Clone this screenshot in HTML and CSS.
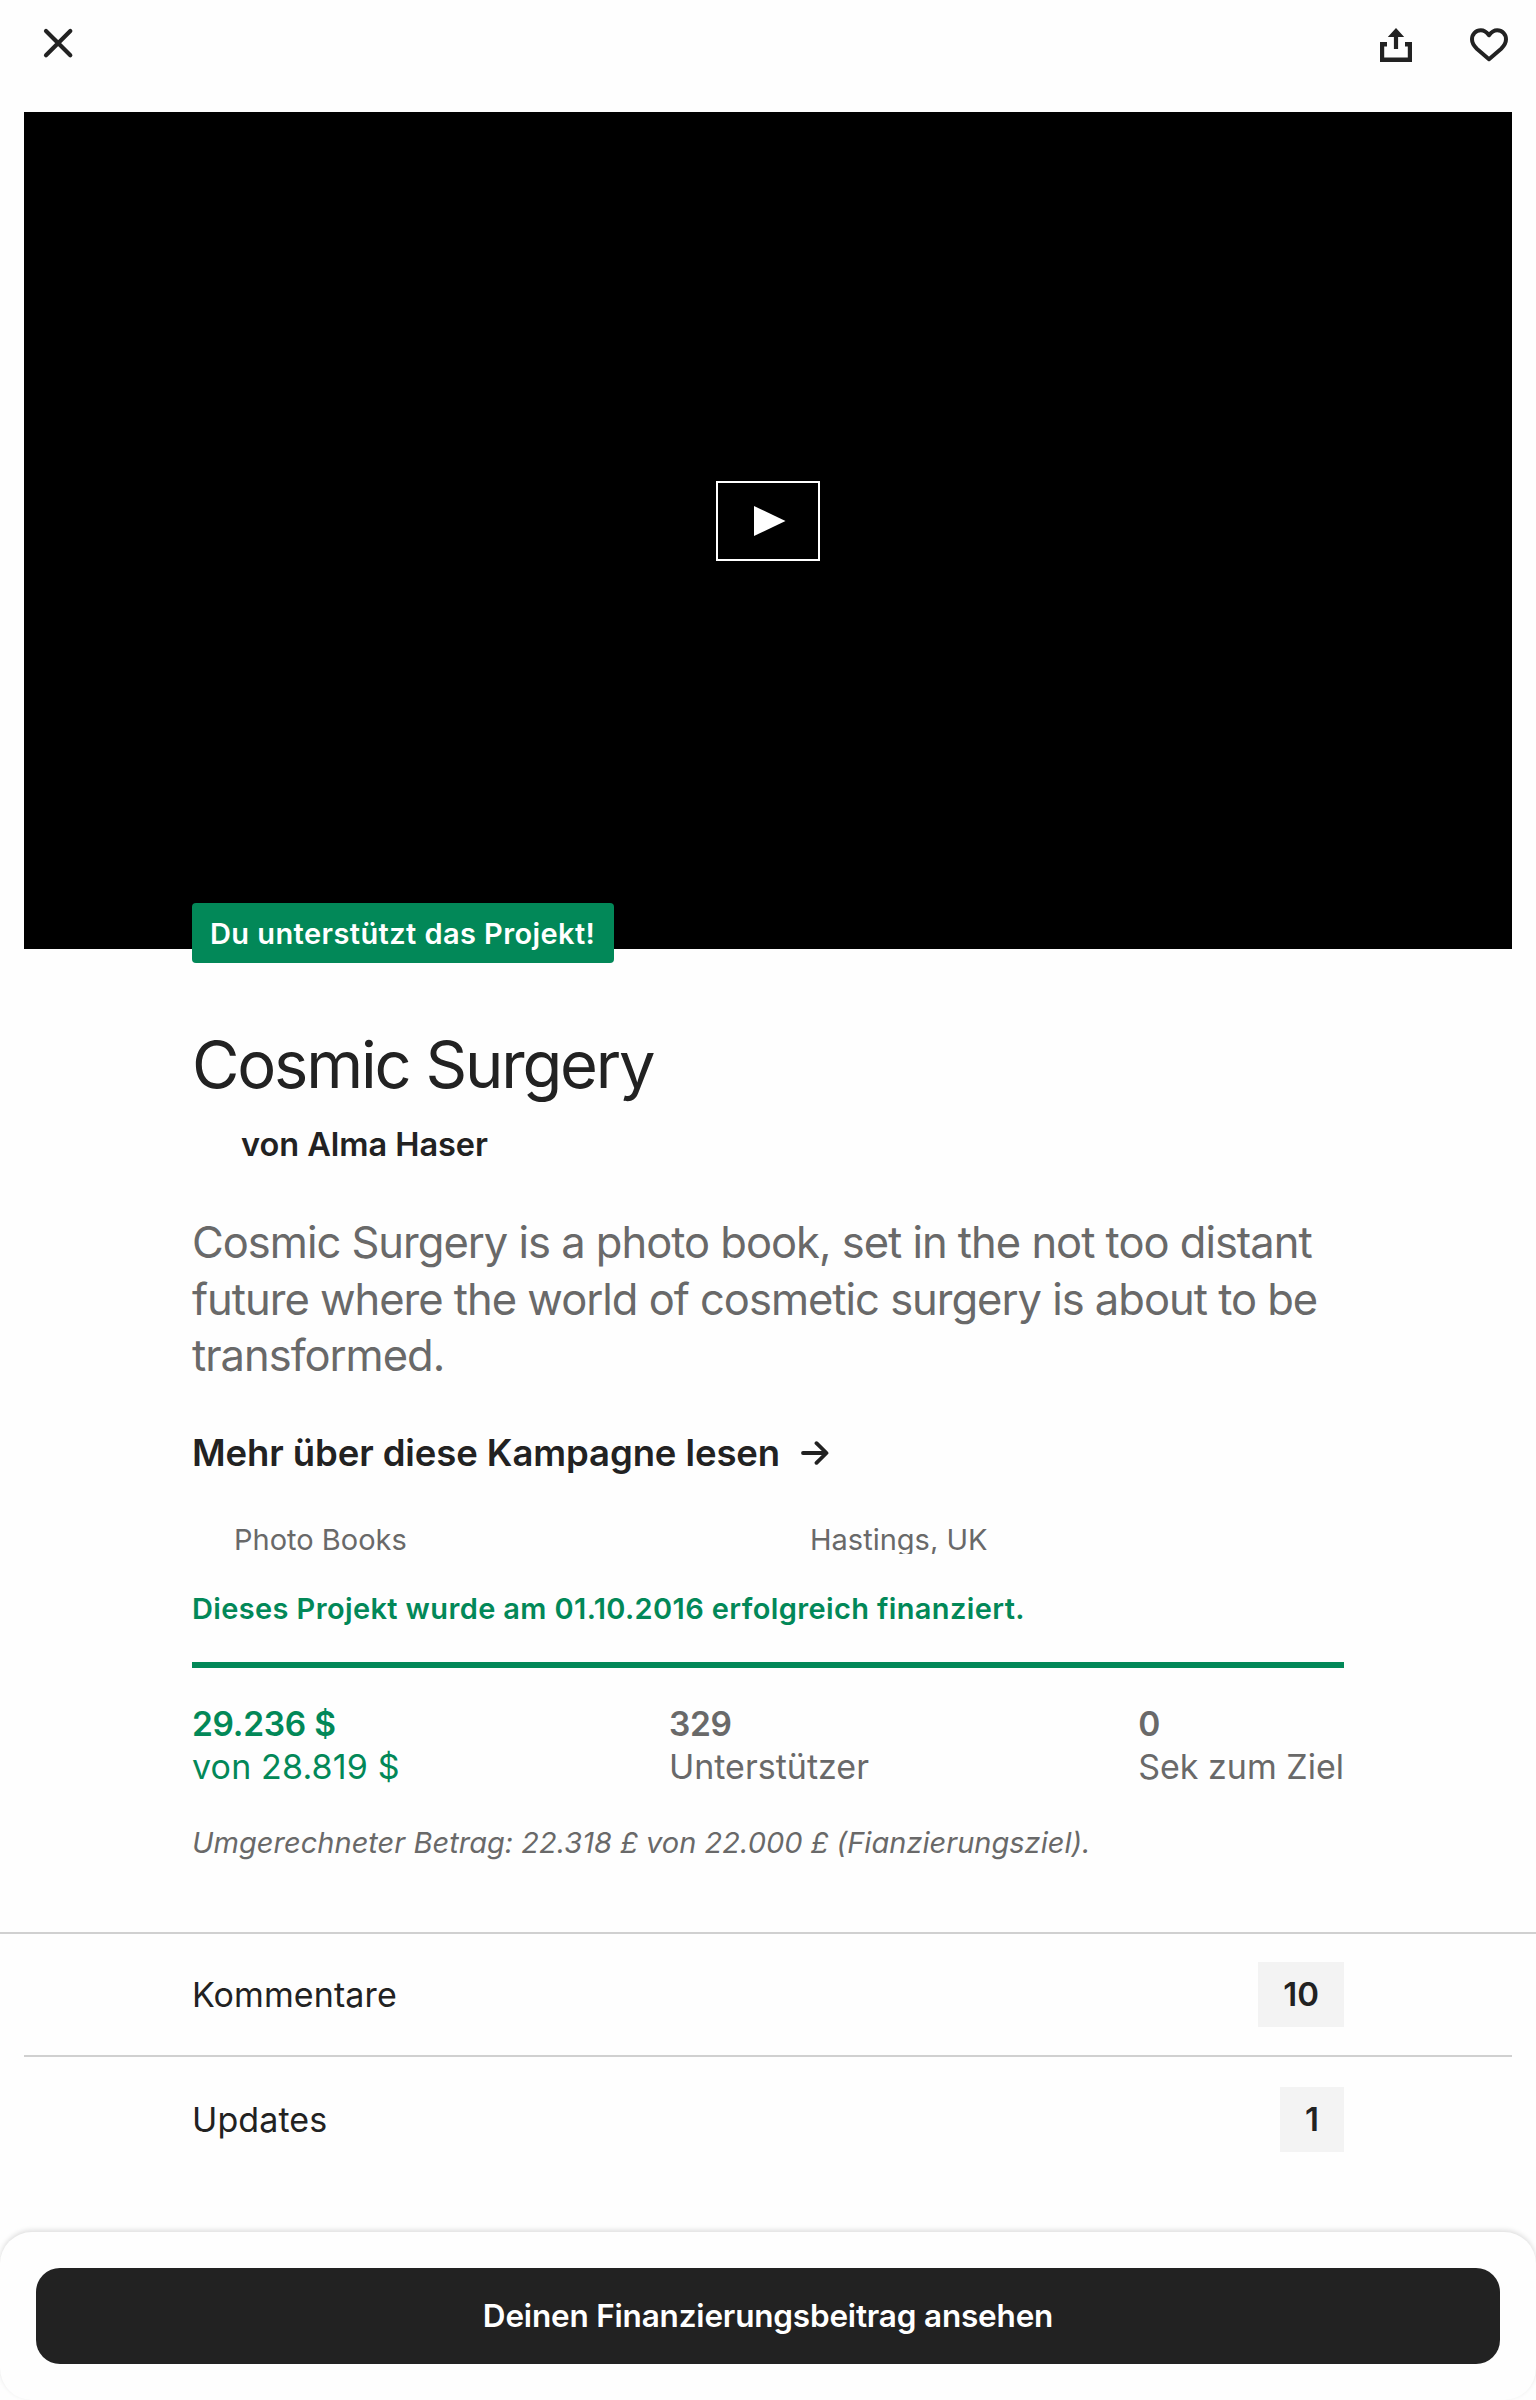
FILE: index.html
```html
<!DOCTYPE html>
<html lang="de">
<head>
<meta charset="utf-8">
<title>Cosmic Surgery</title>
<link rel="stylesheet" href="styles.css">
</head>
<body>
<header class="topbar">
  <svg class="icon-close" viewBox="0 0 32 32" width="32" height="32"><path d="M4 4 28.3 28.3M28.3 4 4 28.3" fill="none" stroke="#222" stroke-width="4.2" stroke-linecap="round"/></svg>
  <div class="topbar-actions">
    <svg viewBox="0 0 32 34" width="32" height="34"><path d="M7 16.3H2V31.8H30V16.3H25" fill="none" stroke="#222" stroke-width="4.4"/><path d="M16 0 24.2 9H18.1V21H13.9V9H7.8Z" fill="#222"/></svg>
    <svg viewBox="0 0 38 34" width="38" height="34"><path d="M19 7.2C16.3 3.6 13.9 2.2 10.8 2.2C5.8 2.2 2 6.1 2 11.3C2 15 3.6 17.6 6.8 20.7L19 31.2L31.2 20.7C34.4 17.6 36 15 36 11.3C36 6.1 32.2 2.2 27.2 2.2C24.1 2.2 21.7 3.6 19 7.2Z" fill="none" stroke="#222" stroke-width="4" stroke-linejoin="round"/></svg>
  </div>
</header>
<section class="video">
  <div class="play"><svg viewBox="0 0 32 30" width="32" height="30"><path d="M0 0 31.5 15 0 30Z" fill="#fff"/></svg></div>
</section>
<main class="content">
  <div class="tag">Du unterstützt das Projekt!</div>
  <h1 class="title">Cosmic Surgery</h1>
  <p class="author">von Alma Haser</p>
  <p class="blurb">Cosmic Surgery is a photo book, set in the not too distant future where the world of cosmetic surgery is about to be transformed.</p>
  <a class="more"><span>Mehr über diese Kampagne lesen</span><svg viewBox="0 0 28 24" width="28" height="24"><path d="M2 12H25M15.5 2.2 25.5 12 15.5 21.8" fill="none" stroke="#222" stroke-width="3.8" stroke-linecap="round" stroke-linejoin="round"/></svg></a>
  <div class="meta"><span>Photo Books</span><span>Hastings, UK</span></div>
  <p class="funded">Dieses Projekt wurde am 01.10.2016 erfolgreich finanziert.</p>
  <div class="progress"></div>
  <div class="stats">
    <div class="stat stat-green"><strong>29.236 $</strong><span>von 28.819 $</span></div>
    <div class="stat"><strong>329</strong><span>Unterstützer</span></div>
    <div class="stat"><strong>0</strong><span>Sek zum Ziel</span></div>
  </div>
  <p class="note">Umgerechneter Betrag: 22.318 £ von 22.000 £ (Fianzierungsziel).</p>
</main>
<nav class="links">
  <a class="row"><span>Kommentare</span><span class="count">10</span></a>
  <hr class="divider">
  <a class="row row-last"><span>Updates</span><span class="count">1</span></a>
</nav>
<footer class="panel"><button class="cta">Deinen Finanzierungsbeitrag ansehen</button></footer>
</body>
</html>
```
FILE: styles.css
```css
* { box-sizing: border-box; margin: 0; padding: 0; }

body {
  height: 2400px;
  overflow: hidden;
  background: #fefefe;
  color: #222;
  font-family: Inter, "Liberation Sans", sans-serif;
  font-weight: 400;
}

svg { display: block; flex: none; }

.topbar {
  display: flex;
  justify-content: space-between;
  height: 112px;
  padding: 28px 28px 0 42px;
}
.icon-close { margin-top: -1px; }
.topbar-actions { display: flex; gap: 58px; }

.video {
  display: flex;
  align-items: center;
  justify-content: center;
  height: 837px;
  margin: 0 24px;
  padding-bottom: 19px;
  background: #000;
}
.play {
  display: flex;
  align-items: center;
  width: 104px;
  height: 80px;
  padding-left: 36px;
  border: 2px solid #fff;
}

.content { width: 1152px; margin: 0 auto; }

.tag {
  width: 422px;
  height: 60px;
  margin-top: -46px;
  padding-left: 18px;
  border-radius: 4px;
  background: #028858;
  color: #fff;
  font-size: 29px;
  font-weight: 600;
  line-height: 62px;
  letter-spacing: 0.41px;
  white-space: nowrap;
}
.title {
  margin-top: 62px;
  font-size: 65px;
  font-weight: 400;
  line-height: 80px;
  letter-spacing: -2.2px;
}
.author {
  margin-top: 20px;
  padding-left: 49px;
  font-size: 32.5px;
  font-weight: 600;
  line-height: 40px;
  letter-spacing: -0.04px;
}
.blurb {
  margin-top: 49px;
  color: #696969;
  font-size: 43.5px;
  line-height: 56.67px;
  letter-spacing: -1.01px;
}
.more {
  display: flex;
  align-items: center;
  gap: 21px;
  margin-top: 47px;
  font-size: 36.5px;
  font-weight: 600;
  line-height: 44px;
  letter-spacing: -0.1px;
}
.meta {
  display: grid;
  grid-template-columns: 1fr 1fr;
  height: 29px;
  margin-top: 50px;
  overflow: hidden;
  color: #696969;
  font-size: 29px;
  line-height: 29px;
}
.meta span { padding-left: 42px; }
.funded {
  margin-top: 37px;
  color: #028858;
  font-size: 29px;
  font-weight: 600;
  line-height: 36px;
  letter-spacing: 0.37px;
}
.progress { height: 6px; margin-top: 35px; background: #028858; }

.stats {
  display: flex;
  justify-content: space-between;
  margin-top: 35px;
  color: #696969;
  font-size: 34px;
  line-height: 42px;
}
.stat { display: flex; flex-direction: column; }
.stat strong { font-size: 33.5px; font-weight: 600; line-height: 43px; letter-spacing: -0.28px; }
.stat-green { color: #028858; letter-spacing: 0.15px; }

.note {
  margin-top: 37px;
  color: #696969;
  font-size: 29px;
  font-style: italic;
  line-height: 36px;
  letter-spacing: 0.02px;
}

.links { margin-top: 71px; border-top: 2px solid #d0d0d0; }
.row {
  display: flex;
  align-items: center;
  justify-content: space-between;
  width: 1152px;
  height: 121px;
  margin: 0 auto;
  font-size: 34px;
  letter-spacing: 0.1px;
}
.row-last { height: 125px; }
.divider { height: 2px; margin: 0 24px; border: 0; background: #d0d0d0; }
.count {
  height: 65px;
  padding: 0 25px;
  background: #f3f3f3;
  font-size: 33px;
  font-weight: 600;
  line-height: 65px;
  letter-spacing: 0;
}

.panel {
  height: 168px;
  margin-top: 50px;
  padding: 36px;
  border-radius: 32px;
  background: #fefefe;
  box-shadow: 0 -2px 5px rgba(0, 0, 0, 0.13);
}
.cta {
  display: block;
  width: 100%;
  height: 96px;
  padding-bottom: 2px;
  border: 0;
  border-radius: 24px;
  background: #222;
  color: #fff;
  font-family: inherit;
  font-size: 31.5px;
  font-weight: 600;
  letter-spacing: -0.19px;
}
```
